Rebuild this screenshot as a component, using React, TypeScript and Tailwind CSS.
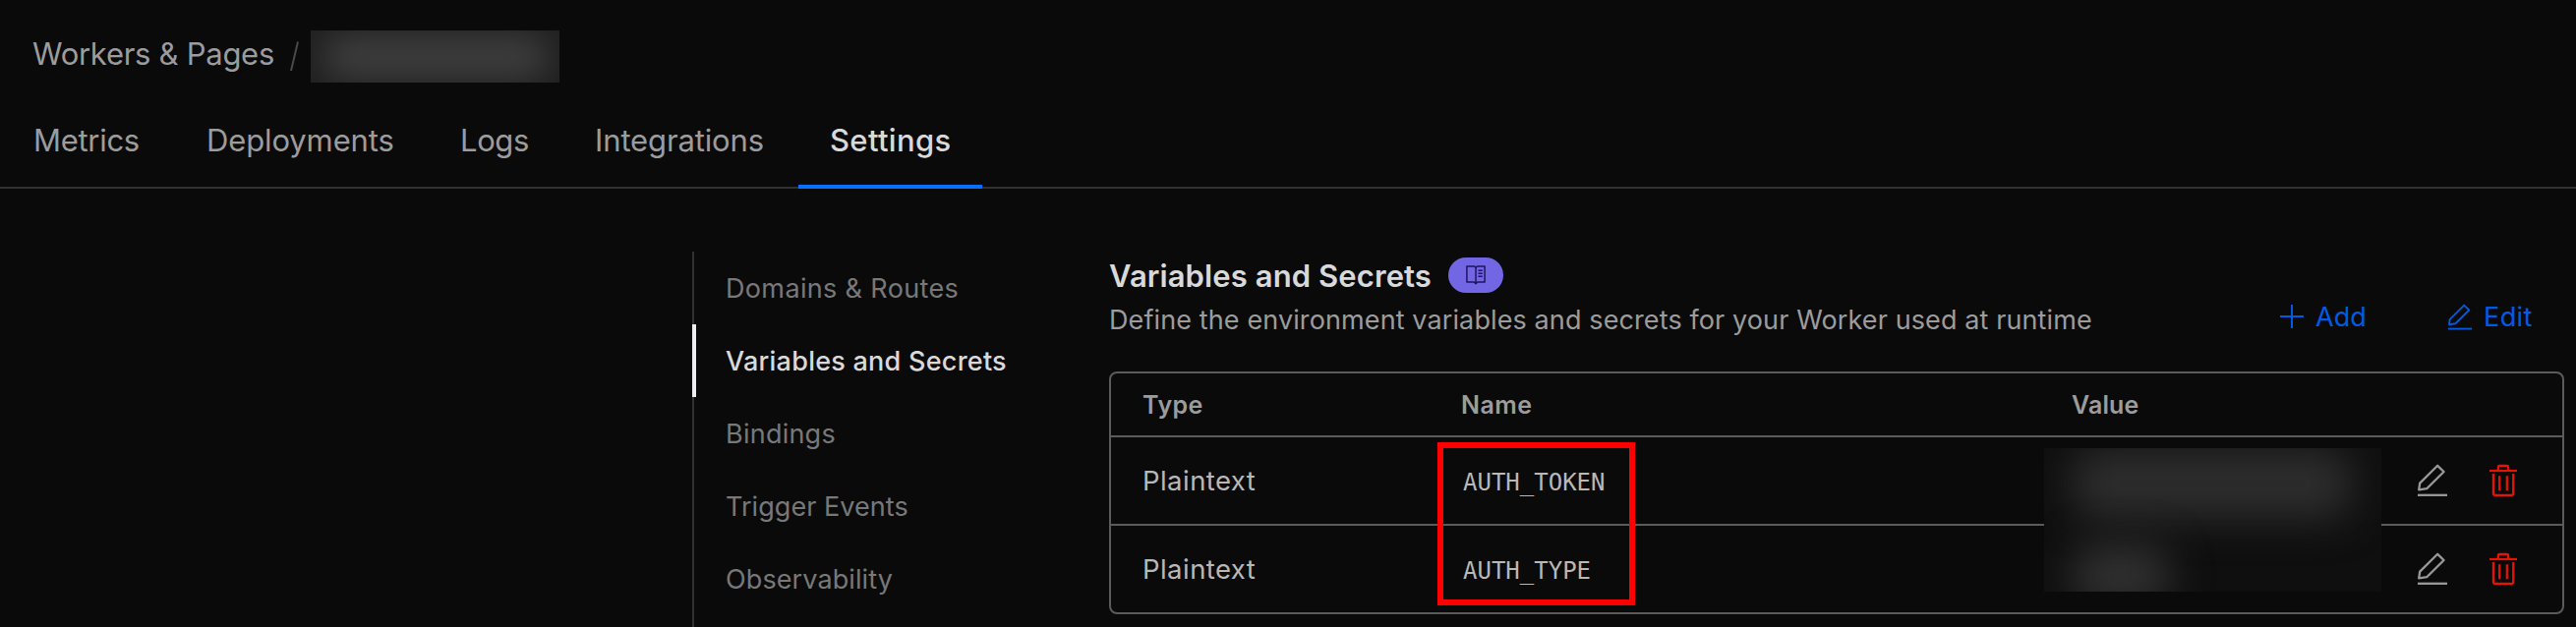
type IconProps = { className?: string; stroke?: number };

function PencilIcon({ className, stroke = 2.3 }: IconProps) {
  return (
    <svg viewBox="0 0 30 33.5" fill="none" stroke="currentColor" strokeWidth={stroke} className={className}>
      <path d="M1.2 26.4 2.2 19.6 20.2 1.8 26.6 8 9.2 25.2Z" strokeLinejoin="round" />
      <path d="M0 31.8H30" />
    </svg>
  );
}

function TrashIcon({ className }: IconProps) {
  return (
    <svg viewBox="0 0 28 33" fill="none" stroke="currentColor" strokeWidth="2.2" className={className}>
      <path d="M0 7H28" />
      <path d="M8.8 6.6V3.2Q8.8 1.9 10.1 1.9H17.9Q19.2 1.9 19.2 3.2V6.6" />
      <path d="M3.9 10V30.6Q3.9 31.8 5.1 31.8H23Q24.2 31.8 24.2 30.6V10" />
      <path d="M10.2 12.3V27.2M17.8 12.3V27.2" />
    </svg>
  );
}

function BookIcon({ className }: IconProps) {
  return (
    <svg viewBox="0 0 20 20" fill="none" stroke="currentColor" strokeWidth="1.5" className={className}>
      <path d="M10 2.4 8.6 1H.9V17H8.2L10 18.6 11.8 17H19.1V1H11.4L10 2.4V18.6" strokeLinejoin="round" />
      <path d="M12.5 5.2H16.8M12.5 8.2H16.8M12.5 11.2H16.8" />
    </svg>
  );
}

function PlusIcon({ className }: IconProps) {
  return (
    <svg viewBox="0 0 24 24" fill="none" stroke="currentColor" strokeWidth="2" className={className}>
      <path d="M12 0V24M0 12H24" />
    </svg>
  );
}

const tabs = [
  { label: "Metrics", box: "w-[176px] tracking-[-0.3px]" },
  { label: "Deployments", box: "w-[258px] tracking-[-0.12px]" },
  { label: "Logs", box: "w-[137px] tracking-[-0.4px]" },
  { label: "Integrations", box: "w-[239px] tracking-[-0.13px]" },
  { label: "Settings", box: "w-[187px] tracking-[0.33px]", active: true },
];

const sections = [
  { label: "Domains & Routes", tracking: "tracking-[0.35px]" },
  { label: "Variables and Secrets", tracking: "tracking-[0.25px]", active: true },
  { label: "Bindings", tracking: "tracking-[0.24px]" },
  { label: "Trigger Events", tracking: "tracking-[0.05px]" },
  { label: "Observability", tracking: "tracking-[0.1px]" },
];

const variables = [
  { type: "Plaintext", name: "AUTH_TOKEN" },
  { type: "Plaintext", name: "AUTH_TYPE" },
];

export default function App() {
  return (
    <div className="flex h-[638px] w-[2620px] flex-col overflow-hidden bg-[#0a0a0a] font-['Inter',sans-serif] text-[#9c9c9c]">
      <header className="flex h-[84px] shrink-0 items-start pt-[31px] pl-[33px] text-[31px] leading-[48px]">
        <span className="w-[262px] tracking-[-0.28px]">Workers &amp; Pages</span>
        <svg viewBox="0 0 9 31" className="mt-[11px] h-[31px] w-[9px] text-[#4a4a4a]" fill="none" stroke="currentColor" strokeWidth="2">
          <path d="M8 0.5 1 30" />
        </svg>
        <div className="relative ml-3 h-[53px] w-[253px] overflow-hidden bg-[#202020]">
          <div className="absolute top-1 left-3 h-[46px] w-[230px] rounded-3xl bg-[#3d3d3d] blur-[16px]" />
        </div>
      </header>

      <nav className="flex h-[108px] shrink-0 border-b-2 border-[#313131] pl-[2px] text-[31px] leading-10">
        {tabs.map((t) => (
          <a
            key={t.label}
            className={`-mb-[2px] shrink-0 pt-[39px] pl-8 ${t.box} ${
              t.active ? "border-b-4 border-[#086fff] font-medium text-[#d9d9d9]" : ""
            }`}
          >
            {t.label}
          </a>
        ))}
      </nav>

      <div className="flex min-h-0 flex-1 pl-[704px]">
        <aside className="flex w-[424px] shrink-0 flex-col pt-16 text-[27px]">
          {sections.map((s) => (
            <a
              key={s.label}
              className={`flex h-[74px] shrink-0 items-center pt-[2px] ${s.tracking} ${
                s.active
                  ? "border-l-4 border-[#eceef1] pl-[30px] font-medium text-[#d9d9d9]"
                  : "border-l-2 border-[#313131] pl-8 text-[#787878]"
              }`}
            >
              {s.label}
            </a>
          ))}
          <div className="flex-1 border-l-2 border-[#313131]" />
        </aside>

        <main className="w-[1480px] shrink-0 pt-[70px]">
          <div className="flex h-[116px] justify-between">
            <div>
              <div className="flex h-9 items-center gap-4">
                <h2 className="w-[329px] pt-[2px] text-[31px] leading-[38px] font-semibold tracking-[0.1px] whitespace-nowrap text-[#d9d9d9]">
                  Variables and Secrets
                </h2>
                <span className="flex h-9 w-14 items-center justify-center rounded-full bg-[#7366e4]">
                  <BookIcon className="h-5 w-5 text-[#21135f]" />
                </span>
              </div>
              <p className="mt-2 text-[27px] leading-10 tracking-[0.11px] whitespace-nowrap">
                Define the environment variables and secrets for your Worker used at runtime
              </p>
            </div>
            <div className="mt-10 flex h-10 items-center text-[27px] text-[#005be4]">
              <button className="flex w-[171px] items-center">
                <PlusIcon className="h-6 w-6" />
                <span className="ml-3 pt-[2px]">Add</span>
              </button>
              <button className="flex w-[118px] items-center">
                <PencilIcon className="h-[27px] w-6 shrink-0" stroke={2.3} />
                <span className="ml-3 pt-[2px] tracking-[0.4px]">Edit</span>
              </button>
            </div>
          </div>

          <div className="relative rounded-[8px] border-2 border-[#5b5b5b]">
            <div className="grid h-[65px] grid-cols-[324px_621px_1fr] items-center border-b-2 border-[#5b5b5b] pt-[2px] pl-8 text-[25px] font-semibold tracking-[0.45px]">
              <span>Type</span>
              <span>Name</span>
              <span className="tracking-[0.15px]">Value</span>
            </div>
            {variables.map((v, i) => (
              <div
                key={v.name}
                className={`grid grid-cols-[324px_621px_352px_73px_1fr] items-center pl-8 text-[#b8b8b8] ${
                  i === 0 ? "h-[90px] border-b-2 border-[#5b5b5b]" : "h-[88px]"
                }`}
              >
                <span className="pt-[2px] text-[27.5px] tracking-[0.45px]">{v.type}</span>
                <span className="pt-[3px] pl-[2px] font-['DejaVu_Sans_Mono',monospace] text-[24px]">{v.name}</span>
                <span />
                <PencilIcon className="h-[33.5px] w-[30px] text-[#999999]" />
                <TrashIcon className="mb-[2px] h-[33px] w-7 text-[#e81403]" />
              </div>
            ))}

            <div className="absolute top-[76px] left-[949px] h-[146px] w-[343px] overflow-hidden bg-[#0f0f0f]">
              <div className="absolute top-0 left-7 h-[72px] w-[285px] rounded-3xl bg-[#2d2d2d] blur-[20px]" />
              <div className="absolute top-[98px] left-7 h-[64px] w-[100px] rounded-3xl bg-[#303030] blur-[20px]" />
            </div>
            <div className="absolute top-[70px] left-[332px] h-[166px] w-[201px] border-[6px] border-[#ff0000]" />
          </div>
        </main>
      </div>
    </div>
  );
}
